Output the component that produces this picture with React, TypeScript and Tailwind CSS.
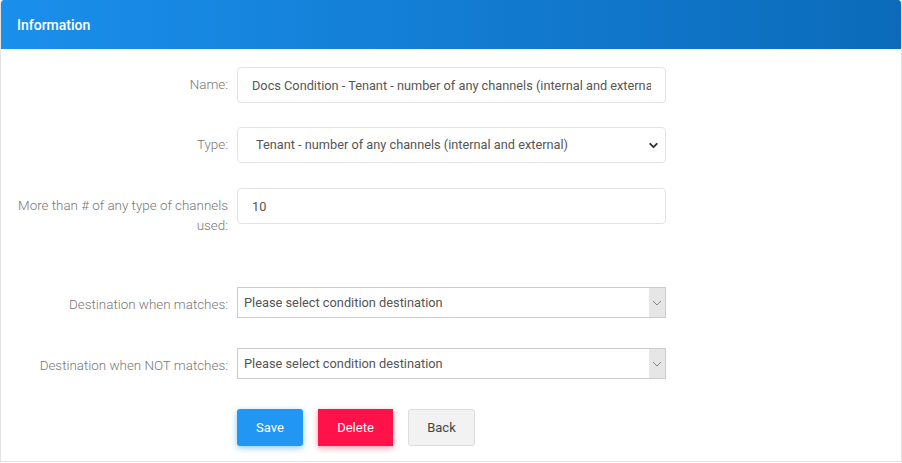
import { ChevronDown } from 'lucide-react'

function Label({ children, className = '' }: { children: React.ReactNode; className?: string }) {
  return (
    <div className={`w-[236px] shrink-0 pl-3 pr-[9px] text-right text-[13.4px] font-light leading-5 text-[#777] ${className}`}>
      {children}
    </div>
  )
}

function DestSelect() {
  return (
    <div className="flex h-[31px] w-[429px] items-stretch border border-[#ccc] bg-white">
      <div className="flex flex-1 items-center pl-[6px] text-[12.8px] text-[#555]">
        Please select condition destination
      </div>
      <div className="flex w-[16px] items-center justify-center bg-[#e6e6e6]">
        <svg width="10" height="6" viewBox="0 0 10 6" fill="none">
          <path d="M1 1l4 4 4-4" stroke="#888" strokeWidth="1" />
        </svg>
      </div>
    </div>
  )
}

export default function App() {
  return (
    <div className="h-[463px] w-[902px] bg-white font-['Roboto',sans-serif]">
      <div className="h-[462px] overflow-hidden rounded-t-[4px] border-b border-l border-r border-[#e2e2e2]">
        {/* Header */}
        <div className="flex h-[49px] items-center bg-gradient-to-r from-[#1a8fec] to-[#0b6bba] pl-4 pt-[2px] text-[14px] font-medium text-white">
          Information
        </div>

        <div className="pt-[18px]">
          {/* Name */}
          <div className="flex items-center">
            <Label>Name:</Label>
            <input
              readOnly
              value="Docs Condition - Tenant - number of any channels (internal and external)"
              className="h-9 w-[429px] rounded border border-[#e3e3e3] px-[14px] text-[12.75px] text-[#555] outline-none"
            />
          </div>

          {/* Type */}
          <div className="mt-6 flex items-center">
            <Label>Type:</Label>
            <div className="flex h-9 w-[429px] items-center justify-between rounded border border-[#e3e3e3] pl-[18px] pr-[5px] text-[12.75px] text-[#555]">
              <span>Tenant - number of any channels (internal and external)</span>
              <ChevronDown className="h-[13px] w-[13px] text-[#333]" strokeWidth={3.5} />
            </div>
          </div>

          {/* More than */}
          <div className="mt-[25px] flex items-start">
            <Label className="pt-2">More than # of any type of channels used:</Label>
            <input
              readOnly
              value="10"
              className="h-9 w-[429px] rounded border border-[#e3e3e3] px-[14px] text-[12.75px] text-[#555] outline-none"
            />
          </div>

          {/* Destination when matches */}
          <div className="mt-[51px] flex items-center">
            <Label className="pt-[5px]">Destination when matches:</Label>
            <DestSelect />
          </div>

          {/* Destination when NOT matches */}
          <div className="mt-[30px] flex items-center">
            <Label className="pt-[5px]">Destination when NOT matches:</Label>
            <DestSelect />
          </div>

          {/* Buttons */}
          <div className="mt-[30px] flex gap-[15px] pl-[236px]">
            <button className="h-[37px] w-[66px] rounded-[3px] bg-[#2196f3] text-[13px] text-white shadow-[0_2px_6px_rgba(33,150,243,0.5)]">
              Save
            </button>
            <button className="h-[37px] w-[75px] bg-[#ff1249] text-[13px] text-white shadow-[0_2px_6px_rgba(255,18,73,0.45)]">
              Delete
            </button>
            <button className="h-[37px] w-[67px] rounded-[3px] border border-[#ddd] bg-[#f2f2f2] text-[13px] text-[#444]">
              Back
            </button>
          </div>
        </div>
      </div>
    </div>
  )
}
